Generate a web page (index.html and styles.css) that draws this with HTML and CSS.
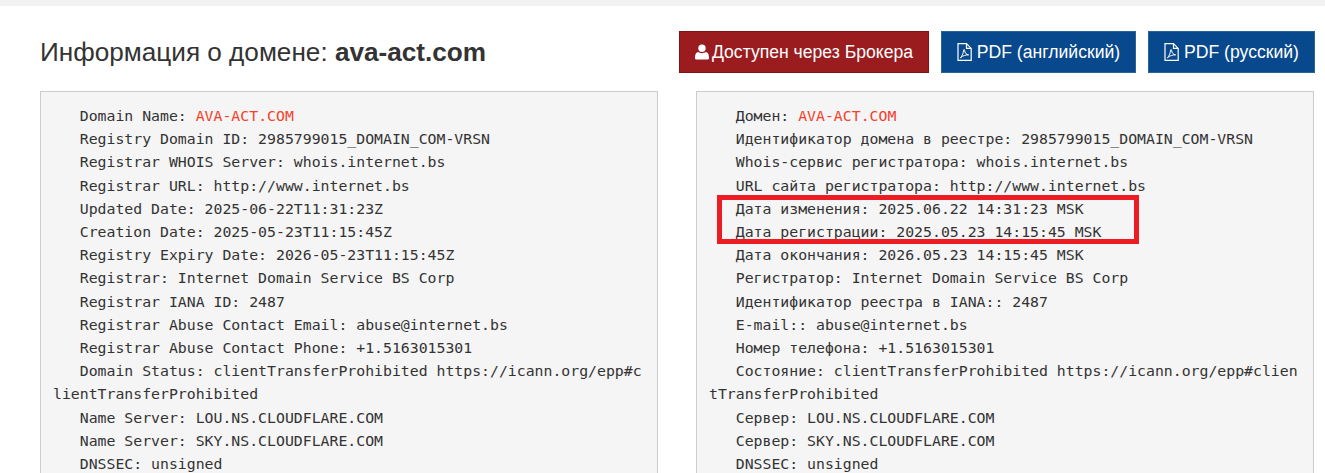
FILE: index.html
```html
<!DOCTYPE html>
<html lang="ru">
<head>
<meta charset="utf-8">
<title>Информация о домене</title>
<link rel="stylesheet" href="styles.css">
</head>
<body>
<div class="topbar"></div>
<main class="page">
  <header class="head">
    <h1 class="title">Информация о домене: <b>ava-act.com</b></h1>
    <div class="actions">
      <a class="btn btn-red"><svg class="ico" viewBox="0 0 14 16"><circle cx="7" cy="4.2" r="3.7" fill="currentColor"/><path d="M1 15.500c-.6 0-1-.5-1-1.200 0-3 .7-6 3.200-6.200.8.7 2.200 1.200 3.800 1.200s3-.5 3.800-1.200c2.500.2 3.200 3.200 3.200 6.200 0 .7-.4 1.200-1 1.200z" fill="currentColor"/></svg>Доступен через Брокера</a>
      <a class="btn btn-blue btn-en"><svg class="ico ico-pdf" viewBox="0 0 15 18"><path d="M1 .7h8.500l4.700 4.700v11.900H1zM9.500.7v4.700h4.700" fill="none" stroke="currentColor" stroke-width="1.200"/><path d="M3.300 14.800c1.500-1 3-4.300 3.300-7.600.1-1 1-.8 1 .1 0 2.500 1.700 4.300 4 4.600-2.700-.2-5.500.7-8.300 2.900z" fill="none" stroke="currentColor"/></svg>PDF (английский)</a>
      <a class="btn btn-blue btn-ru"><svg class="ico ico-pdf" viewBox="0 0 15 18"><path d="M1 .7h8.500l4.700 4.700v11.900H1zM9.500.7v4.700h4.700" fill="none" stroke="currentColor" stroke-width="1.200"/><path d="M3.300 14.800c1.500-1 3-4.300 3.300-7.600.1-1 1-.8 1 .1 0 2.500 1.700 4.300 4 4.600-2.700-.2-5.500.7-8.300 2.900z" fill="none" stroke="currentColor"/></svg>PDF (русский)</a>
    </div>
  </header>
  <section class="cols">
<pre class="whois">   Domain Name: <span class="hl">AVA-ACT.COM</span>
   Registry Domain ID: 2985799015_DOMAIN_COM-VRSN
   Registrar WHOIS Server: whois.internet.bs
   Registrar URL: http://www.internet.bs
   Updated Date: 2025-06-22T11:31:23Z
   Creation Date: 2025-05-23T11:15:45Z
   Registry Expiry Date: 2026-05-23T11:15:45Z
   Registrar: Internet Domain Service BS Corp
   Registrar IANA ID: 2487
   Registrar Abuse Contact Email: abuse@internet.bs
   Registrar Abuse Contact Phone: +1.5163015301
   Domain Status: clientTransferProhibited https://icann.org/epp#clientTransferProhibited
   Name Server: LOU.NS.CLOUDFLARE.COM
   Name Server: SKY.NS.CLOUDFLARE.COM
   DNSSEC: unsigned</pre>
<pre class="whois">   Домен: <span class="hl">AVA-ACT.COM</span>
   Идентификатор домена в реестре: 2985799015_DOMAIN_COM-VRSN
   Whois-сервис регистратора: whois.internet.bs
   URL сайта регистратора: http://www.internet.bs
   Дата изменения: 2025.06.22 14:31:23 MSK
   Дата регистрации: 2025.05.23 14:15:45 MSK
   Дата окончания: 2026.05.23 14:15:45 MSK
   Регистратор: Internet Domain Service BS Corp
   Идентификатор реестра в IANA:: 2487
   E-mail:: abuse@internet.bs
   Номер телефона: +1.5163015301
   Состояние: clientTransferProhibited https://icann.org/epp#clientTransferProhibited
   Сервер: LOU.NS.CLOUDFLARE.COM
   Сервер: SKY.NS.CLOUDFLARE.COM
   DNSSEC: unsigned<span class="mark"></span></pre>
  </section>
</main>
</body>
</html>
```
FILE: styles.css
```css
html, body {
  margin: 0;
  height: 473px;
  overflow: hidden;
  background: #fff;
}
.topbar {
  height: 6px;
  background: #f2f2f2;
}
.page {
  padding: 25px 10px 0 40px;
}
.head {
  display: flex;
  justify-content: space-between;
  align-items: flex-start;
  height: 60px;
}
.title {
  margin: 6px 0 0;
  font: 400 26.15px/30px "Liberation Sans", Arial, sans-serif;
  color: #333;
}
.title b {
  font-weight: 700;
}
.actions {
  display: flex;
  gap: 12px;
}
.btn {
  display: flex;
  align-items: center;
  justify-content: center;
  box-sizing: border-box;
  width: 167px;
  height: 42px;
  border: 1px solid;
  font: 17.6px/20px "Liberation Sans", Arial, sans-serif;
  color: #fff;
}
.btn-red {
  width: 250px;
  background: #9a1c1f;
  border-color: #7c1416;
}
.btn-blue {
  background: #08488c;
  border-color: #2a6496;
}
.btn-en {
  width: 195px;
}
.ico {
  width: 14px;
  height: 16px;
  margin-right: 3px;
}
.ico-pdf {
  width: 15px;
  height: 18px;
  margin-right: 5px;
}
.cols {
  display: grid;
  grid-template-columns: 618px 618px;
  column-gap: 38px;
}
.whois {
  position: relative;
  box-sizing: border-box;
  margin: 0;
  padding: 12px;
  border: 1px solid #ccc;
  background: #f5f5f5;
  color: #333;
  font: 14.82px/23.2px "DejaVu Sans Mono", monospace;
  white-space: pre-wrap;
  word-break: break-all;
}
.hl {
  color: #f4412a;
}
.mark {
  position: absolute;
  left: 20px;
  top: 103px;
  width: 422px;
  height: 49px;
  box-sizing: border-box;
  border: 5px solid #ed1c24;
}
```
